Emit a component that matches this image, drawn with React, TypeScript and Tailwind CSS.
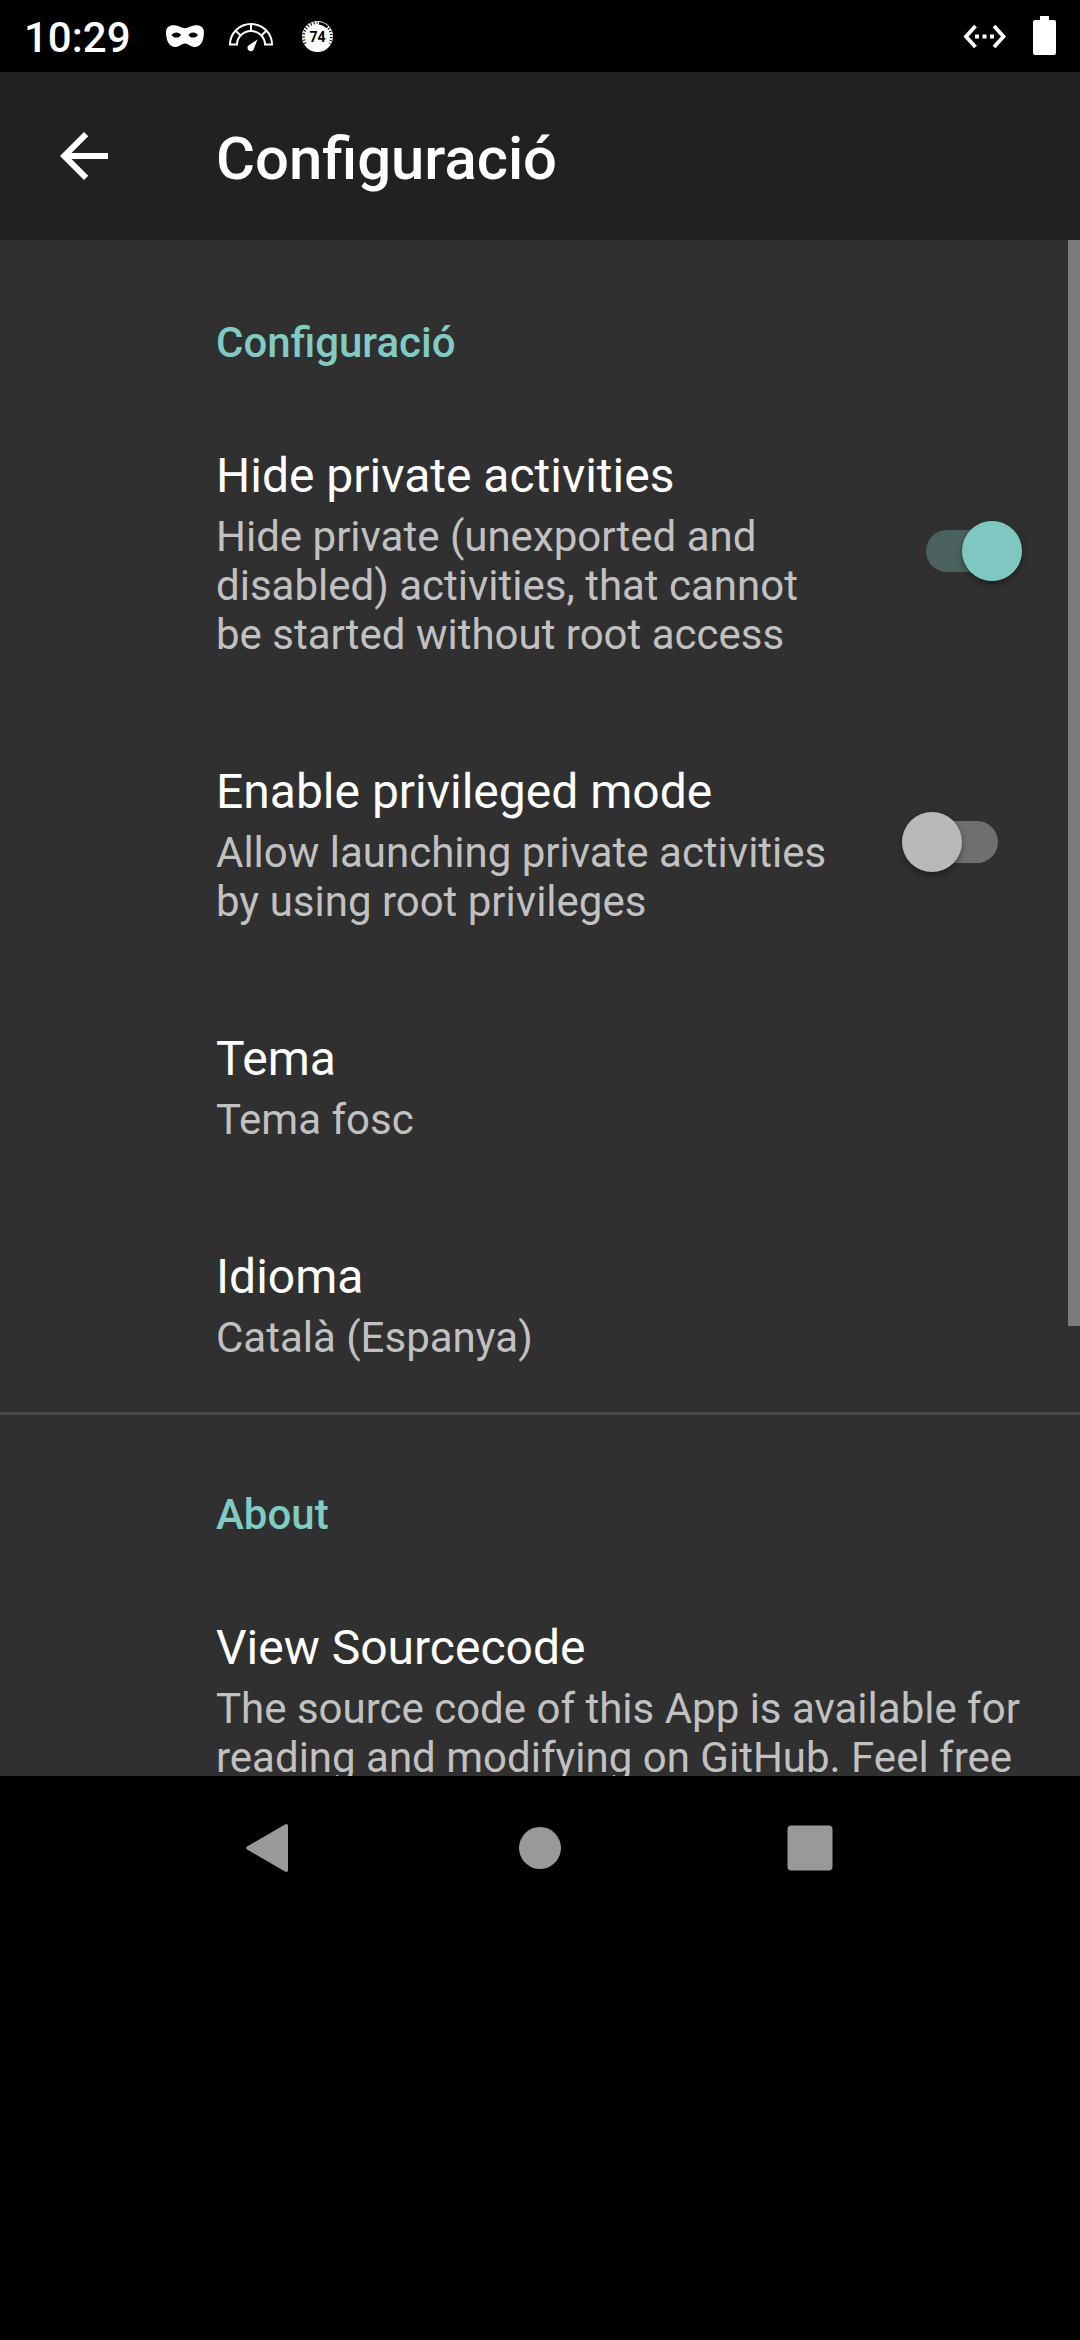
import React from "react";

function StatusBar() {
  return (
    <div className="flex h-[72px] items-center bg-black px-6 text-white">
      <span className="w-[136px] pt-[3px] text-[42px] leading-[69px] font-medium">10:29</span>
      <svg className="h-[72px] w-[190px]" viewBox="160 0 190 72" fill="currentColor">
        <path
          fillRule="evenodd"
          d="M173 25.3c5.500-.6 8 2.900 12 2.900s6.500-3.500 12-2.900c6 .7 7.200 3.700 6.900 8.700c-.4 7.500-3.400 12.900-9.400 12.900c-4.500 0-6-3.400-9.500-3.400s-5 3.400-9.500 3.400c-6 0-9-5.400-9.400-12.900c-.3-5 .9-8 6.900-8.700zM171.500 35c2 3.400 8 3.400 9.500 0c-1.500-3.400-7.500-3.400-9.500 0zM188.500 35c1.500 3.400 7.500 3.400 9.500 0c-2-3.400-8-3.400-9.500 0z"
        />
        <g fill="none" stroke="currentColor" strokeWidth="2">
          <path d="M230 44.500a21 20.500 0 0 1 42 0h-7a14 13.500 0 0 0-28 0z" />
          <path d="M235.500 30.500l5 5M251 24v6.500M266.500 30.500l-5 5" />
        </g>
        <path d="M257.500 39.500l-3.500 9a3.300 3.300 0 1 1-5.500-3z" />
        <circle cx="317.500" cy="36.500" r="15.500" />
        <g fill="none" stroke="#000" strokeWidth="2.600">
          <path d="M305.500 43.500a13.800 13.800 0 0 1 12-20.800" strokeDasharray="1.100 2" />
          <path d="M319 23.300q5 .5 8.500 4" />
          <path d="M328.500 28.300a13.800 13.800 0 0 1 1 15.200" strokeDasharray="1.100 2" />
        </g>
        <text x="317.500" y="41.700" textAnchor="middle" fontSize="14" fontWeight="700" fill="#000">74</text>
      </svg>
      <div className="grow" />
      <svg className="h-[72px] w-[100px]" viewBox="956 0 100 72" fill="currentColor">
        <path d="M975.500 26l-9.500 10.500l9.500 10.500M994 26l9.500 10.500l-9.500 10.500" fill="none" stroke="currentColor" strokeWidth="3.800" />
        <path d="M975 34.500h4v4h-4zM982.500 34.500h4v4h-4zM990 34.500h4v4h-4z" />
        <path d="M1040 16h9v4h5q2 0 2 2v31q0 2-2 2h-19q-2 0-2-2v-31q0-2 2-2h5z" />
      </svg>
    </div>
  );
}

function Toggle({ on }: { on: boolean }) {
  return on ? (
    <div className="relative mr-[58px] flex h-[60px] w-24 items-center">
      <div className="h-[42px] w-full rounded-full bg-[#4b615e]" />
      <div className="absolute right-0 size-[60px] rounded-full bg-[#7fc8c1] shadow-[0_3px_6px_rgba(0,0,0,0.4)]" />
    </div>
  ) : (
    <div className="relative mr-[82px] mb-px flex h-[60px] w-24 items-center">
      <div className="h-[42px] w-full rounded-full bg-[#6f6f6f]" />
      <div className="absolute left-0 size-[60px] rounded-full bg-[#b9b9b9] shadow-[0_3px_6px_rgba(0,0,0,0.4)]" />
    </div>
  );
}

function Category({ children }: { children: React.ReactNode }) {
  return (
    <div className="h-[153px] shrink-0 pt-[78px] pl-[216px] text-[42px] leading-[49px] font-medium text-[#80cbc4]">
      {children}
    </div>
  );
}

function Item({ title, lines, on }: { title: string; lines: string[]; on?: boolean }) {
  return (
    <div className="flex shrink-0 items-center justify-between pl-[216px]">
      <div className="pt-[55px] pb-[50px]">
        <div className="text-[48px] leading-[56px] text-white">{title}</div>
        <div className="mt-2 text-[42px] leading-[49px] text-[#c1c1c1]">
          {lines.map((line) => (
            <div key={line} className="whitespace-nowrap">{line}</div>
          ))}
        </div>
      </div>
      {on !== undefined && <Toggle on={on} />}
    </div>
  );
}

export default function App() {
  return (
    <div className="flex h-[2340px] w-[1080px] flex-col overflow-hidden bg-black font-['Roboto',sans-serif]">
      <StatusBar />
      <header className="flex h-[168px] shrink-0 items-center bg-[#212121] pl-12 text-white">
        <svg className="size-[72px]" viewBox="0 0 24 24" fill="currentColor">
          <path d="M20 11H7.830l5.590-5.590L12 4l-8 8 8 8 1.410-1.410L7.830 13H20z" />
        </svg>
        <h1 className="ml-24 pt-[5px] text-[59.8px] leading-[70px] font-medium">Configuració</h1>
      </header>
      <main className="relative flex h-[1536px] shrink-0 flex-col overflow-hidden bg-[#303030]">
        <Category>Configuració</Category>
        <Item
          title="Hide private activities"
          lines={["Hide private (unexported and", "disabled) activities, that cannot", "be started without root access"]}
          on={true}
        />
        <Item
          title="Enable privileged mode"
          lines={["Allow launching private activities", "by using root privileges"]}
          on={false}
        />
        <Item title="Tema" lines={["Tema fosc"]} />
        <Item title="Idioma" lines={["Català (Espanya)"]} />
        <div className="-mb-[3px] h-[3px] shrink-0 bg-[#494949]" />
        <Category>About</Category>
        <Item
          title="View Sourcecode"
          lines={["The source code of this App is available for", "reading and modifying on GitHub. Feel free"]}
        />
        <div className="absolute top-0 right-0 h-[1086px] w-3 bg-[#7b7b7b]" />
      </main>
      <nav className="flex h-36 shrink-0 items-center justify-center gap-[198px] text-[#999999]">
        <svg className="size-[72px]" viewBox="0 0 72 72" fill="currentColor">
          <path d="M13.500 34.300L51 12.500q3-1.500 3 1.800v43.400q0 3.300-3 1.800L13.500 37.700q-3-1.700 0-3.400z" />
        </svg>
        <svg className="size-[72px]" viewBox="0 0 72 72" fill="currentColor">
          <circle cx="36" cy="36" r="21" />
        </svg>
        <svg className="size-[72px]" viewBox="0 0 72 72" fill="currentColor">
          <rect x="13.500" y="13.500" width="45" height="45" rx="4" />
        </svg>
      </nav>
    </div>
  );
}
